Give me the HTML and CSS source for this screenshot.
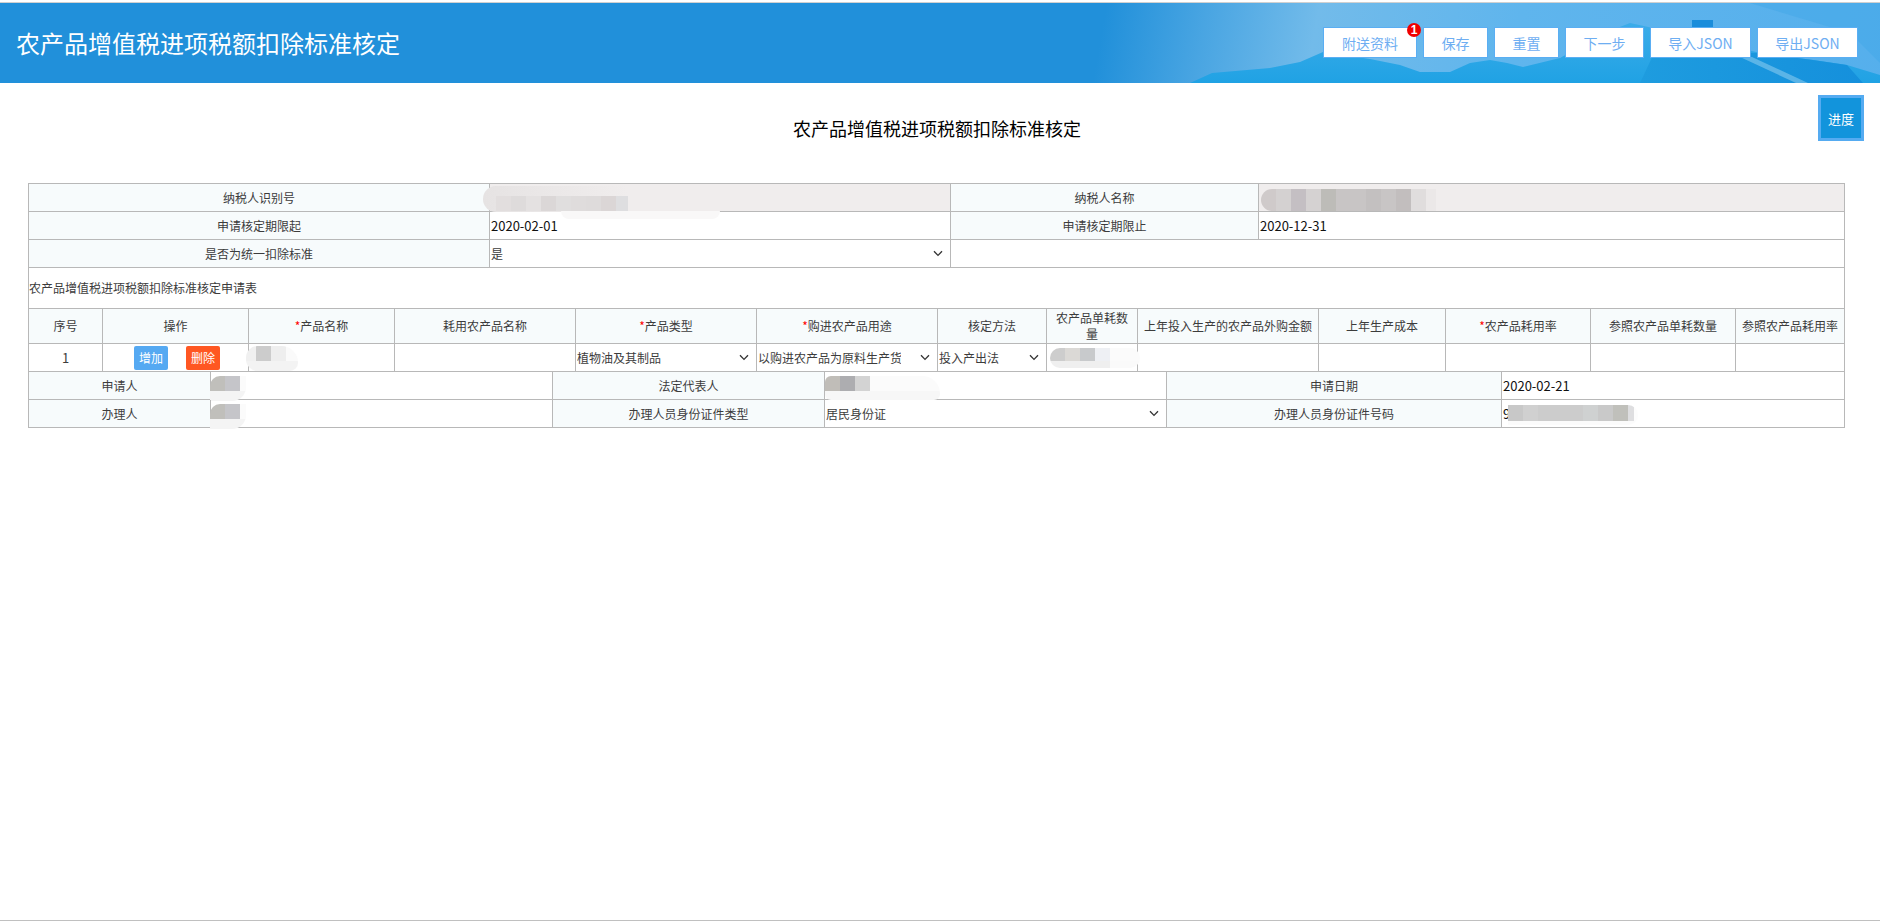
FILE: index.html
```html
<!DOCTYPE html>
<html lang="zh-CN">
<head>
<meta charset="utf-8">
<title>农产品增值税进项税额扣除标准核定</title>
<link rel="stylesheet" href="styles.css">
</head>
<body>
<div class="page">
  <header class="topbar">
    <svg class="scenery" viewBox="0 0 1880 80" preserveAspectRatio="none" aria-hidden="true">
      <defs>
        <linearGradient id="sea" x1="0" y1="0" x2="0" y2="1">
          <stop offset="0" stop-color="#3bace9"/>
          <stop offset="1" stop-color="#20a2e4"/>
        </linearGradient>
        <linearGradient id="deep" x1="0" y1="0" x2="1" y2="0">
          <stop offset="0" stop-color="#1e9cdf"/>
          <stop offset="1" stop-color="#1590dc"/>
        </linearGradient>
      </defs>
      <path d="M1190 80 L1212 70 L1270 65 L1300 59 L1323 49 L1370 56 L1400 62 L1420 69 L1450 69 L1470 60 L1490 57 L1507 60 L1523 64 L1560 55 L1607 29 L1630 20 L1653 25 L1700 35 L1760 50 L1813 57 L1847 62 L1880 72 L1880 80 Z" fill="url(#sea)"/>
      <path d="M1640 80 L1655 48 L1760 50 L1813 57 L1847 62 L1863 80 Z" fill="url(#deep)"/>
      <path d="M1740 54 L1752 54 L1808 80 L1796 80 Z" fill="#9bd3f1" opacity=".5"/>
      <path d="M1692 17 L1713 17 L1713 30 L1692 30 Z" fill="#1a8ddb"/>
      <path d="M1750 0 L1880 0 L1880 60 L1850 30 Z" fill="#42a8e8" opacity=".5"/>
    </svg>
    <h1 class="app-title">农产品增值税进项税额扣除标准核定</h1>
    <nav class="actions">
      <button class="action w94" type="button">附送资料<span class="badge">1</span></button>
      <button class="action w65" type="button">保存</button>
      <button class="action w65" type="button">重置</button>
      <button class="action w79" type="button">下一步</button>
      <button class="action w101" type="button">导入JSON</button>
      <button class="action w101" type="button">导出JSON</button>
    </nav>
  </header>

  <main class="content">
    <h2 class="form-title">农产品增值税进项税额扣除标准核定</h2>
    <button class="progress" type="button">进度</button>

    <div class="form">
      <table class="sheet sheet-top">
        <colgroup><col class="a1"><col class="a2"><col class="a3"><col class="a4"></colgroup>
        <tr class="row-first">
          <td class="label">纳税人识别号</td>
          <td class="readonly"><span class="smudge tin"></span><span class="smudge tin-low"></span></td>
          <td class="label">纳税人名称</td>
          <td class="readonly"><span class="smudge name"></span></td>
        </tr>
        <tr class="row">
          <td class="label">申请核定期限起</td>
          <td class="value">2020-02-01</td>
          <td class="label">申请核定期限止</td>
          <td class="value">2020-12-31</td>
        </tr>
        <tr class="row">
          <td class="label">是否为统一扣除标准</td>
          <td class="field"><select class="pick"><option>是</option></select></td>
          <td class="plain" colspan="2"></td>
        </tr>
        <tr class="row-caption">
          <td class="caption" colspan="4">农产品增值税进项税额扣除标准核定申请表</td>
        </tr>
      </table>

      <table class="sheet">
        <colgroup>
          <col class="b1"><col class="b2"><col class="b2"><col class="b3"><col class="b3"><col class="b3">
          <col class="b4"><col class="b5"><col class="b3"><col class="b6"><col class="b7"><col class="b7"><col class="b4">
        </colgroup>
        <tr class="row-head">
          <th class="label">序号</th>
          <th class="label">操作</th>
          <th class="label"><i class="req">*</i>产品名称</th>
          <th class="label">耗用农产品名称</th>
          <th class="label"><i class="req">*</i>产品类型</th>
          <th class="label"><i class="req">*</i>购进农产品用途</th>
          <th class="label">核定方法</th>
          <th class="label">农产品单耗数量</th>
          <th class="label">上年投入生产的农产品外购金额</th>
          <th class="label">上年生产成本</th>
          <th class="label"><i class="req">*</i>农产品耗用率</th>
          <th class="label">参照农产品单耗数量</th>
          <th class="label">参照农产品耗用率</th>
        </tr>
        <tr class="row">
          <td class="index">1</td>
          <td class="ops"><button class="mini add" type="button">增加</button><button class="mini del" type="button">删除</button></td>
          <td class="plain"><span class="smudge product"></span></td>
          <td class="plain"></td>
          <td class="field"><select class="pick"><option>植物油及其制品</option></select></td>
          <td class="field"><select class="pick"><option>以购进农产品为原料生产货物</option></select></td>
          <td class="field"><select class="pick"><option>投入产出法</option></select></td>
          <td class="plain"><span class="smudge qty"></span></td>
          <td class="plain"></td>
          <td class="plain"></td>
          <td class="plain"></td>
          <td class="plain"></td>
          <td class="plain"></td>
        </tr>
      </table>

      <table class="sheet">
        <colgroup><col class="c1"><col class="c2"><col class="c3"><col class="c4"><col class="c5"><col class="c6"></colgroup>
        <tr class="row">
          <td class="label">申请人</td>
          <td class="plain"><span class="smudge person"></span></td>
          <td class="label">法定代表人</td>
          <td class="plain"><span class="smudge legal"></span></td>
          <td class="label">申请日期</td>
          <td class="value">2020-02-21</td>
        </tr>
        <tr class="row">
          <td class="label">办理人</td>
          <td class="plain"><span class="smudge person"></span></td>
          <td class="label">办理人员身份证件类型</td>
          <td class="field"><select class="pick"><option>居民身份证</option></select></td>
          <td class="label">办理人员身份证件号码</td>
          <td class="value">9<span class="smudge idno"></span></td>
        </tr>
      </table>
    </div>
  </main>
  <footer class="baseline"></footer>
</div>
</body>
</html>
```
FILE: styles.css
```css
* { box-sizing: border-box; }
html, body { margin: 0; padding: 0; height: 100%; background: #fff; overflow: hidden; }
body { font-family: "Noto Sans CJK SC", "Liberation Sans", sans-serif; color: #3c3c3c; font-size: 12px; }
.page { height: 921px; display: flex; flex-direction: column; padding-top: 2px; }

.topbar {
  position: relative;
  height: 81px;
  flex: none;
  border-top: 1px solid #d0d0d0;
  display: flex;
  align-items: center;
  justify-content: space-between;
  padding: 0 22px 0 16px;
  overflow: hidden;
  background: linear-gradient(100deg, #2190da 0, #2190da 1090px, #49a5e2 1190px, #72bbea 1300px, #5fb5ed 1500px, #55afec 1880px);
}
.scenery { position: absolute; left: 0; top: 0; width: 1880px; height: 80px; }
.app-title { position: relative; margin: 0; font-size: 24px; font-weight: 400; color: #fff; line-height: 32px; }
.actions { position: relative; display: flex; gap: 6px; margin-bottom: 1px; }
.action {
  position: relative;
  height: 31px;
  padding: 0;
  background: #fff;
  border: 1px solid #5aaef3;
  color: #6eaef2;
  font: 14px "Noto Sans CJK SC", sans-serif;
  white-space: nowrap;
}
.w94 { width: 94px; }
.w65 { width: 65px; }
.w79 { width: 79px; }
.w101 { width: 101px; }
.badge {
  position: absolute;
  right: -5px;
  top: -5px;
  width: 14px;
  height: 14px;
  border-radius: 50%;
  background: #f00000;
  color: #fff;
  font: 700 12px/14px "Liberation Sans", sans-serif;
  text-align: center;
}

.content { position: relative; flex: 1; padding: 0 35px 0 28px; }
.form-title { margin: 0 -1px 0 0; height: 100px; font-size: 18px; font-weight: 400; color: #000; line-height: 90px; text-align: center; }
.progress {
  position: absolute;
  right: 16px;
  top: 12px;
  width: 46px;
  height: 46px;
  padding: 0;
  background: #1294dc;
  border: 3px solid #55abf1;
  color: #fff;
  font: 13px "Noto Sans CJK SC", sans-serif;
}

.form { width: 1817px; }
.sheet { width: 1817px; table-layout: fixed; border-collapse: separate; border-spacing: 0; }
.sheet td, .sheet th {
  position: relative;
  border-right: 1px solid #b8b8b8;
  border-bottom: 1px solid #b8b8b8;
  padding: 0 1px;
  font-weight: 400;
  font-size: 12px;
  line-height: 16px;
}
.sheet td:first-child, .sheet th:first-child { border-left: 1px solid #b8b8b8; }
.sheet .row-first td { border-top: 1px solid #b8b8b8; }
.row-first { height: 29px; }
.row { height: 28px; }
.row-caption { height: 41px; }
.row-head { height: 35px; }

.a1 { width: 462px; }
.a2 { width: 461px; }
.a3 { width: 308px; }
.a4 { width: 586px; }

.b1 { width: 75px; }
.b2 { width: 146px; }
.b3 { width: 181px; }
.b4 { width: 109px; }
.b5 { width: 91px; }
.b6 { width: 127px; }
.b7 { width: 145px; }

.c1 { width: 183px; }
.c2 { width: 342px; }
.c3 { width: 272px; }
.c4 { width: 342px; }
.c5 { width: 335px; }
.c6 { width: 343px; }

.sheet .label { background: #f7fbfc; text-align: center; padding: 0 4px; }
.sheet .readonly { background: #f0eded; }
.sheet .value { font-size: 13px; color: #111; }
.sheet .caption { background: #fff; padding: 0; }
.sheet .index { text-align: center; font-size: 13px; }
.req { color: #f00; font-style: normal; }
.sheet .field { padding: 0; }
.pick {
  display: block;
  width: 100%;
  height: 26px;
  border: 0;
  padding: 0 36px 0 1px;
  appearance: none;
  background: transparent url("data:image/svg+xml,%3Csvg xmlns='http://www.w3.org/2000/svg' width='10' height='7' viewBox='0 0 10 7'%3E%3Cpath d='M1 1.2 L5 5.4 L9 1.2' fill='none' stroke='%23333' stroke-width='1.3'/%3E%3C/svg%3E") no-repeat right 7px center;
  font: 12px "Noto Sans CJK SC", sans-serif;
  color: #3c3c3c;
  outline: 0;
}

.sheet .ops { padding: 0 0 0 3px; text-align: center; }
.mini { width: 34px; height: 24px; padding: 0; border: 0; border-radius: 2px; color: #fff; font: 12px "Noto Sans CJK SC", sans-serif; vertical-align: middle; }
.add { background: #55a9f2; margin-right: 18px; }
.del { background: #ff5722; }

.smudge { position: absolute; display: block; }
.tin {
  left: -7px; top: 2px; width: 145px; height: 26px;
  border-radius: 13px 0 0 13px;
  background: linear-gradient(to right, #e2dede 0 15px, #dedbdb 0 30px, #e4e1e1 0 45px, #dbd7d7 0 60px, #e0dede 0 75px, #dfdcdc 0 90px, #dedbdb 0 105px, #dbd6d6 0 120px, #dedee0 0 135px) 13px 10px / 135px 15px no-repeat, linear-gradient(to right, #e6e3e3, #f0eded);
}
.tin-low { left: 71px; top: 27px; width: 159px; height: 8px; border-radius: 0 0 60px 60px; background: #f9f8f8; }
.name {
  left: 2px; top: 5px; width: 186px; height: 22px;
  border-radius: 11px 0 6px 11px;
  background: linear-gradient(to right, #cfcaca 0 15px, #d4d1d1 0 30px, #c4bfc3 0 45px, #d5d2d2 0 60px, #bdbcb8 0 75px, #c8c5c5 0 105px, #c3c0c0 0 120px, #c8c5c5 0 135px, #c2bebe 0 150px, #e0dddd 0 165px, #ebe8e8 0 175px, #f0eded 0 186px);
}
.product {
  left: -3px; top: 2px; width: 52px; height: 25px;
  border-radius: 14px 20px 10px 14px;
  background: linear-gradient(to right, #f0f0f0 0 10px, #cccccc 0 25px, #eeeeee 0 40px, #fafafa 0 52px) 0 0 / 52px 15px no-repeat, #f3f3f3;
}
.qty {
  left: 3px; top: 4px; width: 90px; height: 20px;
  border-radius: 10px;
  background: linear-gradient(to right, #cdcdcd 0 15px, #dbd9d6 0 30px, #c8cacc 0 45px, #eef0f4 0 60px, #fbfbfb 0 90px) 0 0 / 90px 13px no-repeat, linear-gradient(to right, #efefef 0 60px, #fafafa 0 90px);
}
.person {
  left: -1px; top: 4px; width: 36px; height: 25px;
  border-radius: 10px 0 14px 0;
  background: linear-gradient(to right, #c0bfbb 0 15px, #c5c5c9 0 30px, #fbfbfb 0 36px) 0 0 / 36px 15px no-repeat, #f4f4f4;
}
.legal {
  left: 0; top: 4px; width: 115px; height: 24px;
  border-radius: 10px 30px 10px 10px;
  background: linear-gradient(to right, #c0bdb8 0 15px, #adadb0 0 30px, #d3d3d3 0 45px, #fbfbfb 0 115px) 0 0 / 115px 15px no-repeat, #f7f7f7;
}
.idno {
  left: 6px; top: 5px; width: 130px; height: 20px;
  border-radius: 0 10px 10px 0;
  background: linear-gradient(to right, #c8c8c8 0 15px, #d0d0d0 0 30px, #cccccc 0 75px, #cfd1d1 0 90px, #c9c9c9 0 105px, #c0c0bb 0 120px, #dedee0 0 126px, #fcfcfc 0 130px) 0 0 / 130px 16px no-repeat, #fbfbfb;
}

.baseline { height: 1px; flex: none; background: #c0c0c0; }
```
